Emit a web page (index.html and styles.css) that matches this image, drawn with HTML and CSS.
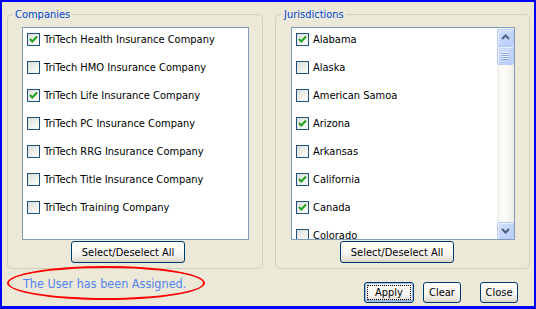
FILE: index.html
```html
<!DOCTYPE html>
<html>
<head>
<meta charset="utf-8">
<link rel="stylesheet" href="styles.css">
</head>
<body>
<div class="window">
  <div class="groups">
    <fieldset class="group group-left">
      <legend>Companies</legend>
      <div class="listbox listbox-left">
        <div class="items">
          <label class="item"><span class="cb checked"><svg viewBox="0 0 11 11" width="11" height="11"><path d="M2 5 L4.3 7.5 L9 2.5" fill="none" stroke="#21a121" stroke-width="2"/></svg></span>TriTech Health Insurance Company</label>
          <label class="item"><span class="cb"></span>TriTech HMO Insurance Company</label>
          <label class="item"><span class="cb checked"><svg viewBox="0 0 11 11" width="11" height="11"><path d="M2 5 L4.3 7.5 L9 2.5" fill="none" stroke="#21a121" stroke-width="2"/></svg></span>TriTech Life Insurance Company</label>
          <label class="item"><span class="cb"></span>TriTech PC Insurance Company</label>
          <label class="item"><span class="cb"></span>TriTech RRG Insurance Company</label>
          <label class="item"><span class="cb"></span>TriTech Title Insurance Company</label>
          <label class="item"><span class="cb"></span>TriTech Training Company</label>
        </div>
      </div>
      <button class="btn btn-all">Select/Deselect All</button>
    </fieldset>
    <fieldset class="group group-right">
      <legend>Jurisdictions</legend>
      <div class="listbox listbox-right">
        <div class="items">
          <label class="item"><span class="cb checked"><svg viewBox="0 0 11 11" width="11" height="11"><path d="M2 5 L4.3 7.5 L9 2.5" fill="none" stroke="#21a121" stroke-width="2"/></svg></span>Alabama</label>
          <label class="item"><span class="cb"></span>Alaska</label>
          <label class="item"><span class="cb"></span>American Samoa</label>
          <label class="item"><span class="cb checked"><svg viewBox="0 0 11 11" width="11" height="11"><path d="M2 5 L4.3 7.5 L9 2.5" fill="none" stroke="#21a121" stroke-width="2"/></svg></span>Arizona</label>
          <label class="item"><span class="cb"></span>Arkansas</label>
          <label class="item"><span class="cb checked"><svg viewBox="0 0 11 11" width="11" height="11"><path d="M2 5 L4.3 7.5 L9 2.5" fill="none" stroke="#21a121" stroke-width="2"/></svg></span>California</label>
          <label class="item"><span class="cb checked"><svg viewBox="0 0 11 11" width="11" height="11"><path d="M2 5 L4.3 7.5 L9 2.5" fill="none" stroke="#21a121" stroke-width="2"/></svg></span>Canada</label>
          <label class="item"><span class="cb"></span>Colorado</label>
        </div>
        <div class="scrollbar">
          <div class="sb-btn"><svg viewBox="0 0 15 15" width="15" height="15"><path d="M4 9 L7.5 5.5 L11 9" fill="none" stroke="#4d6185" stroke-width="2"/></svg></div>
          <div class="sb-thumb"><span></span><span></span><span></span><span></span></div>
          <div class="sb-track"></div>
          <div class="sb-btn"><svg viewBox="0 0 15 15" width="15" height="15"><path d="M4 6 L7.5 9.5 L11 6" fill="none" stroke="#4d6185" stroke-width="2"/></svg></div>
        </div>
      </div>
      <button class="btn btn-all">Select/Deselect All</button>
    </fieldset>
  </div>
  <div class="footer">
    <div class="message">The User has been Assigned.<span class="ring"></span></div>
    <div class="actions">
      <button class="btn btn-default">Apply</button>
      <button class="btn btn-clear">Clear</button>
      <button class="btn btn-close">Close</button>
    </div>
  </div>
</div>
</body>
</html>
```
FILE: styles.css
```css
* { box-sizing: border-box; }
html, body { margin: 0; padding: 0; }
body {
  width: 536px;
  height: 309px;
  font-family: "DejaVu Sans Condensed", "Liberation Sans", sans-serif;
  font-size: 11px;
  color: #000;
}
.window {
  width: 536px;
  height: 309px;
  background: #ece9d8;
  border: 2px solid #0000ff;
  border-bottom-width: 3px;
  padding-top: 6px;
  display: flex;
  flex-direction: column;
}
.groups {
  display: flex;
  gap: 12px;
  padding: 0 4px 0 5px;
}
.group {
  margin: 0;
  border: 1px solid #d0d0bf;
  border-radius: 5px;
  padding: 0 13px 5px 14px;
  display: flex;
  flex-direction: column;
  min-width: 0;
}
.group-left { width: 256px; }
.group-right { width: 255px; padding-left: 15px; padding-right: 14px; }
.group legend {
  color: #0046d5;
  font-size: 11px;
  line-height: 13px;
  padding: 0 2px;
  margin-left: -9px;
}
.listbox {
  margin-top: 6px;
  height: 213px;
  background: #fff;
  border: 1px solid #7f9db9;
  display: flex;
  overflow: hidden;
}
.items {
  flex: 1;
  padding: 5px 0 0 4px;
  display: flex;
  flex-direction: column;
  gap: 15px;
  overflow: hidden;
  min-width: 0;
}
.item {
  display: flex;
  align-items: center;
  height: 13px;
  line-height: 13px;
  white-space: nowrap;
  gap: 4px;
  flex-shrink: 0;
}
.cb {
  width: 13px;
  height: 13px;
  flex-shrink: 0;
  border: 1px solid #1c5180;
  background: linear-gradient(135deg, #dcdcd7 0%, #f4f4f2 70%, #ffffff 100%);
  display: flex;
}
.scrollbar {
  width: 17px;
  flex-shrink: 0;
  display: flex;
  flex-direction: column;
  background: linear-gradient(to right, #f3f1ec, #fefefb 40%, #eeede5);
  padding-top: 1px;
}
.sb-btn, .sb-thumb {
  height: 17px;
  flex-shrink: 0;
  border: 1px solid #b8cbf5;
  border-radius: 2px;
  background: linear-gradient(135deg, #d2defc, #b9cdf7);
  box-shadow: inset 1px 1px 0 #e6eefe;
  display: flex;
  align-items: center;
  justify-content: center;
}
.sb-thumb {
  height: 19px;
  flex-direction: column;
  gap: 1px;
}
.sb-thumb span {
  width: 7px;
  height: 1px;
  background: #eef3fe;
  box-shadow: 0 1px 0 #8aa6e5;
}
.sb-track { flex: 1; }
.btn {
  font-family: "DejaVu Sans Condensed", "Liberation Sans", sans-serif;
  font-size: 11px;
  color: #000;
  height: 22px;
  padding: 0;
  border: 1px solid #003c74;
  border-radius: 3px;
  background: linear-gradient(to bottom, #ffffff 0%, #f5f4ef 60%, #e8e6dd 85%, #d6d0c5 100%);
}
.btn-all {
  width: 114px;
  margin-top: 1px;
  margin-left: 49px;
  align-self: flex-start;
}
.footer {
  display: flex;
  align-items: flex-start;
  padding: 0 16px 0 21px;
}
.message {
  position: relative;
  margin-top: 7px;
  font-size: 12.5px;
  line-height: 15px;
  color: #5283f2;
  white-space: nowrap;
}
.ring {
  position: absolute;
  left: -16px;
  top: -10px;
  width: 198px;
  height: 34px;
  border: 2px solid #ff0000;
  border-radius: 50%;
}
.actions {
  margin-left: auto;
  margin-top: 13px;
  display: flex;
}
.actions .btn { height: 21px; }
.btn-default {
  width: 50px;
  box-shadow: inset 0 0 0 1px #a5bde6, inset 0 -1px 0 1px #97b0e0;
  outline: 1px dotted #000;
  outline-offset: -4px;
}
.btn-clear { width: 38px; margin-left: 9px; }
.btn-close { width: 38px; margin-left: 19px; }
```
